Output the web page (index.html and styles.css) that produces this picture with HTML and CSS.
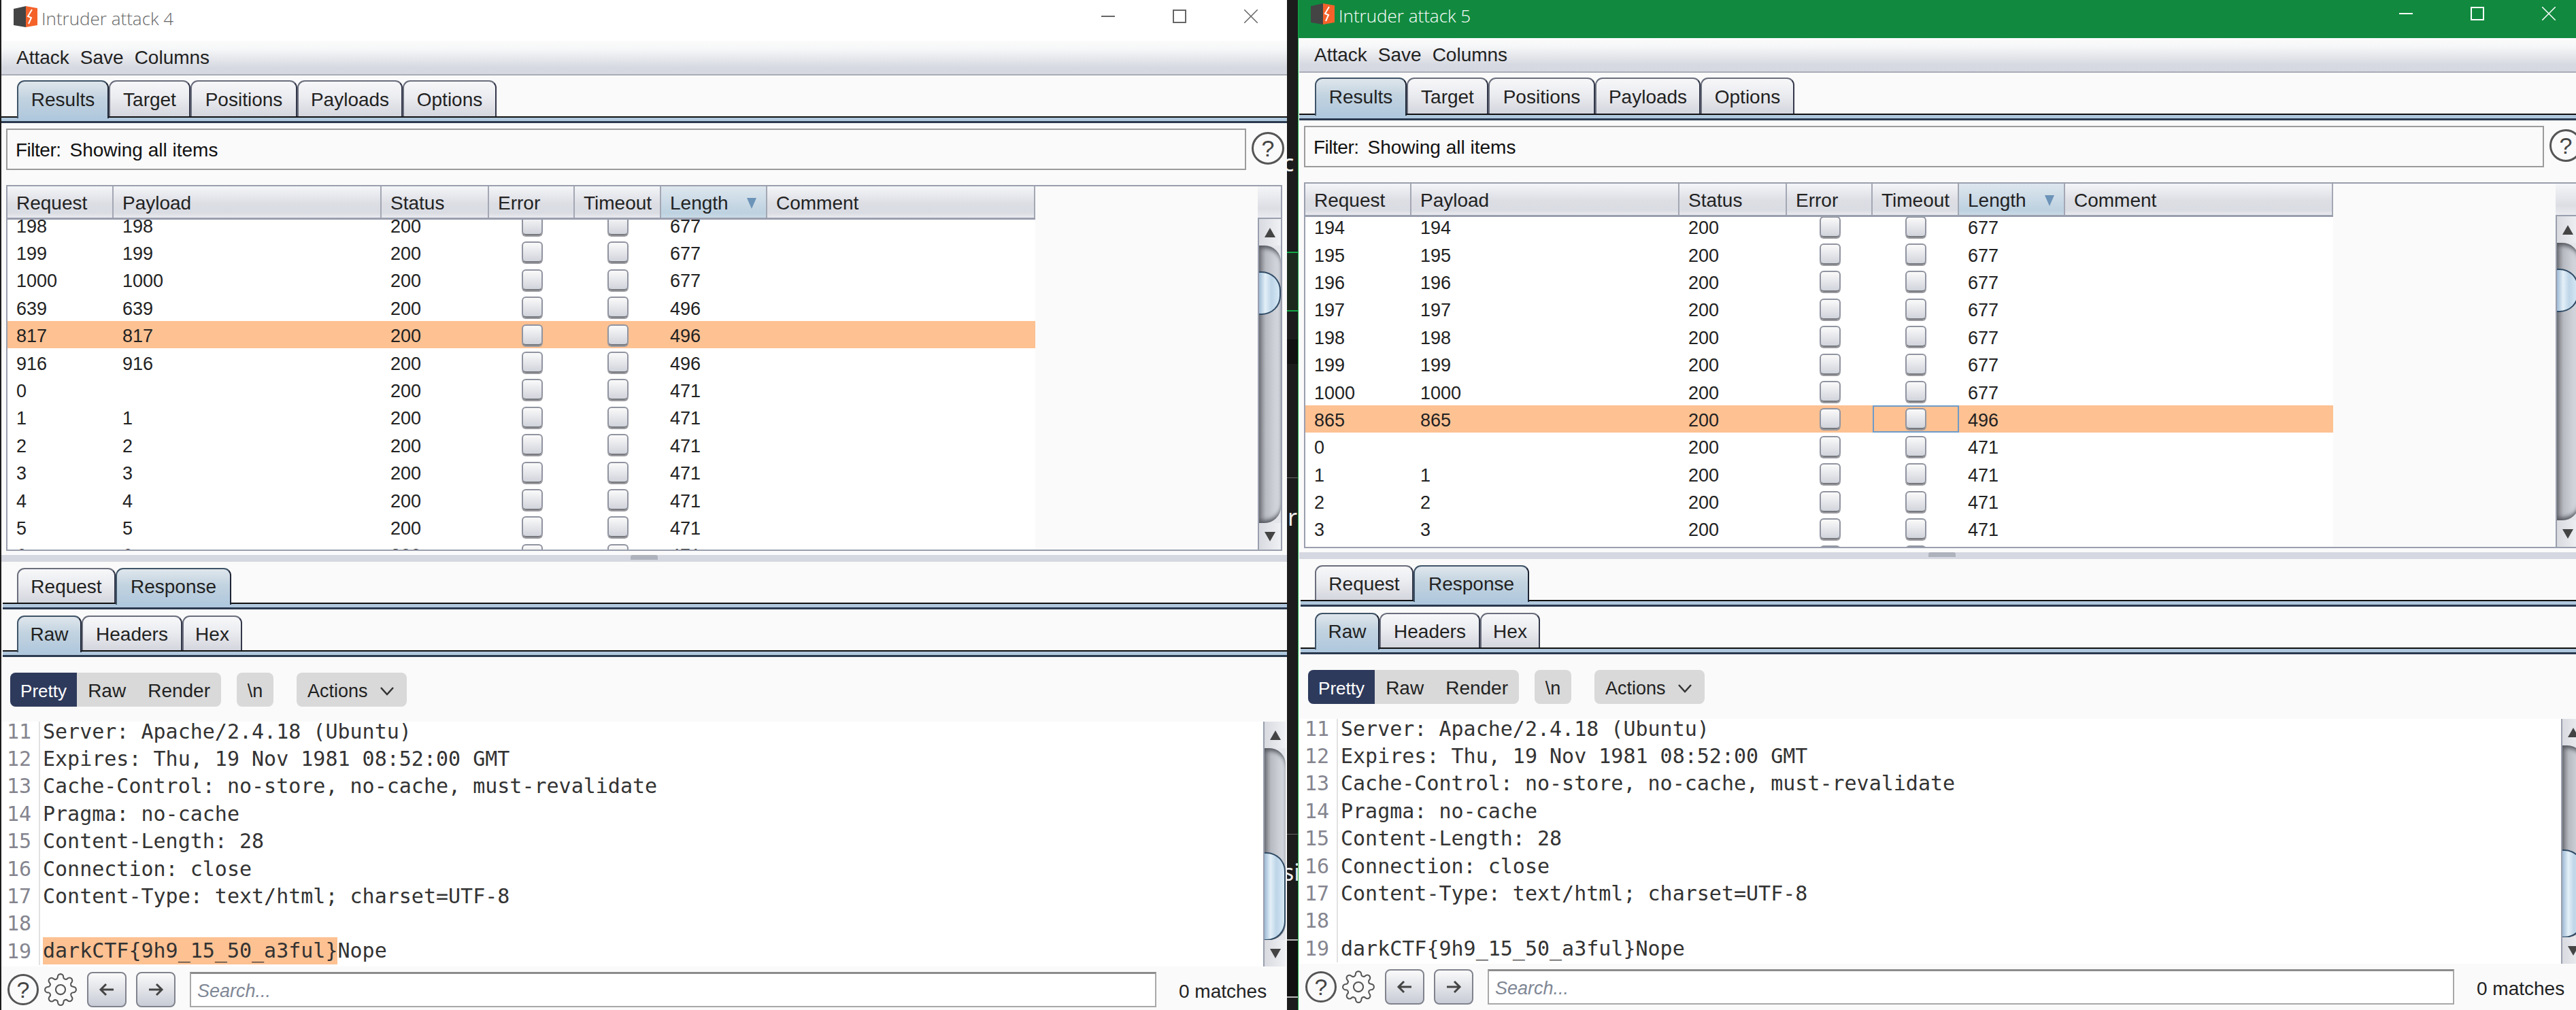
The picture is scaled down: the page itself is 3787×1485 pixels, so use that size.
FILE: index.html
```html
<!DOCTYPE html>
<html lang="en">
<head>
    <meta charset="UTF-8">
    <title>Intruder attacks</title>
    <link rel="stylesheet" href="styles.css">
</head>
<body>

    <!-- attack 4 -->
    <section class="win">
        <header class="title">
            <svg class="logo" viewBox="0 0 35 31"><path d="M0 4 18 0V31L0 28Z" fill="#444"/><path d="M18 0 35 3V28L18 31Z" fill="#f4622a"/><path d="M27 5 21 15 26 17 22 26" fill="none" stroke="#fff" stroke-width="2"/></svg>
            <span class="title-text">Intruder attack 4</span>
            <div class="controls">
                <svg viewBox="0 0 20 20"><path d="M0 10H20" stroke="currentColor" stroke-width="2"/></svg>
                <svg viewBox="0 0 20 20"><rect x="1" y="1" width="18" height="18" fill="none" stroke="currentColor" stroke-width="2"/></svg>
                <svg viewBox="0 0 20 20"><path d="M0 0 20 20M20 0 0 20" stroke="currentColor" stroke-width="1.5"/></svg>
            </div>
        </header>
        <nav class="menu"><span>Attack</span><span>Save</span><span>Columns</span></nav>

        <div class="tabs tabs-main">
            <div class="tab tab-active tab-results">Results</div>
            <div class="tab tab-target">Target</div>
            <div class="tab tab-positions">Positions</div>
            <div class="tab tab-payloads">Payloads</div>
            <div class="tab tab-options">Options</div>
        </div>
        <div class="strip"></div>

        <div class="filter-row">
            <div class="filter"><span class="filter-label">Filter:</span><span class="filter-text">Showing all items</span></div>
            <span class="help">?</span>
        </div>

        <div class="results">
            <div class="grid">
                <div class="row head">
                    <span>Request</span><span>Payload</span><span>Status</span><span>Error</span><span>Timeout</span>
                    <span class="sorted">Length<i class="sort-arrow"></i></span><span>Comment</span>
                </div>
                <div class="rows">
                    <div class="rows-inner rows-a">
                        <div class="row"><span>198</span><span>198</span><span>200</span><span class="c"><i class="check"></i></span><span class="c"><i class="check"></i></span><span>677</span></div>
                        <div class="row"><span>199</span><span>199</span><span>200</span><span class="c"><i class="check"></i></span><span class="c"><i class="check"></i></span><span>677</span></div>
                        <div class="row"><span>1000</span><span>1000</span><span>200</span><span class="c"><i class="check"></i></span><span class="c"><i class="check"></i></span><span>677</span></div>
                        <div class="row"><span>639</span><span>639</span><span>200</span><span class="c"><i class="check"></i></span><span class="c"><i class="check"></i></span><span>496</span></div>
                        <div class="row row-hit"><span>817</span><span>817</span><span>200</span><span class="c"><i class="check"></i></span><span class="c"><i class="check"></i></span><span>496</span></div>
                        <div class="row"><span>916</span><span>916</span><span>200</span><span class="c"><i class="check"></i></span><span class="c"><i class="check"></i></span><span>496</span></div>
                        <div class="row"><span>0</span><span></span><span>200</span><span class="c"><i class="check"></i></span><span class="c"><i class="check"></i></span><span>471</span></div>
                        <div class="row"><span>1</span><span>1</span><span>200</span><span class="c"><i class="check"></i></span><span class="c"><i class="check"></i></span><span>471</span></div>
                        <div class="row"><span>2</span><span>2</span><span>200</span><span class="c"><i class="check"></i></span><span class="c"><i class="check"></i></span><span>471</span></div>
                        <div class="row"><span>3</span><span>3</span><span>200</span><span class="c"><i class="check"></i></span><span class="c"><i class="check"></i></span><span>471</span></div>
                        <div class="row"><span>4</span><span>4</span><span>200</span><span class="c"><i class="check"></i></span><span class="c"><i class="check"></i></span><span>471</span></div>
                        <div class="row"><span>5</span><span>5</span><span>200</span><span class="c"><i class="check"></i></span><span class="c"><i class="check"></i></span><span>471</span></div>
                        <div class="row"><span>6</span><span>6</span><span>200</span><span class="c"><i class="check"></i></span><span class="c"><i class="check"></i></span><span>471</span></div>
                    </div>
                </div>
            </div>
            <div class="table-scroll">
                <div class="scroll-head"></div>
                <div class="scroll">
                    <div class="scroll-btn"><i class="arrow-up"></i></div>
                    <div class="track"><div class="thumb thumb-table"></div></div>
                    <div class="scroll-btn"><i class="arrow-down"></i></div>
                </div>
            </div>
        </div>

        <div class="split"><div class="split-bar"><i class="split-handle"></i></div></div>

        <div class="tabs">
            <div class="tab tab-request">Request</div>
            <div class="tab tab-active tab-response">Response</div>
        </div>
        <div class="strip strip-sub"></div>
        <div class="tabs tabs-inner">
            <div class="tab tab-active tab-raw">Raw</div>
            <div class="tab tab-headers">Headers</div>
            <div class="tab tab-hex">Hex</div>
        </div>
        <div class="strip strip-sub"></div>

        <div class="toolbar">
            <div class="seg"><span class="seg-on">Pretty</span><span>Raw</span><span>Render</span></div>
            <span class="btn btn-nl">\n</span>
            <span class="btn btn-actions">Actions<svg viewBox="0 0 22 14"><path d="M2 2 11 12 20 2" fill="none" stroke="#333" stroke-width="2.5"/></svg></span>
        </div>

        <div class="code-pane">
            <div class="code">
                <div class="line"><span class="num">11</span><span class="txt">Server: Apache/2.4.18 (Ubuntu)</span></div>
                <div class="line"><span class="num">12</span><span class="txt">Expires: Thu, 19 Nov 1981 08:52:00 GMT</span></div>
                <div class="line"><span class="num">13</span><span class="txt">Cache-Control: no-store, no-cache, must-revalidate</span></div>
                <div class="line"><span class="num">14</span><span class="txt">Pragma: no-cache</span></div>
                <div class="line"><span class="num">15</span><span class="txt">Content-Length: 28</span></div>
                <div class="line"><span class="num">16</span><span class="txt">Connection: close</span></div>
                <div class="line"><span class="num">17</span><span class="txt">Content-Type: text/html; charset=UTF-8</span></div>
                <div class="line"><span class="num">18</span><span class="txt"></span></div>
                <div class="line"><span class="num">19</span><span class="txt"><mark>darkCTF{9h9_15_50_a3ful}</mark>Nope</span></div>
            </div>
            <div class="scroll scroll-code">
                <div class="scroll-btn"><i class="arrow-up"></i></div>
                <div class="track"><div class="thumb thumb-code"></div></div>
                <div class="scroll-btn"><i class="arrow-down"></i></div>
            </div>
        </div>

        <div class="bottom">
            <span class="help help-bottom">?</span>
            <svg class="gear" viewBox="0 0 24 24"><circle cx="12" cy="12" r="3.4"/><path d="M19.4 15a1.65 1.65 0 0 0 .33 1.82l.06.06a2 2 0 0 1 0 2.83 2 2 0 0 1-2.83 0l-.06-.06a1.65 1.65 0 0 0-1.82-.33 1.65 1.65 0 0 0-1 1.51V21a2 2 0 0 1-2 2 2 2 0 0 1-2-2v-.09A1.65 1.65 0 0 0 9 19.4a1.65 1.65 0 0 0-1.82.33l-.06.06a2 2 0 0 1-2.83 0 2 2 0 0 1 0-2.83l.06-.06a1.65 1.65 0 0 0 .33-1.82 1.65 1.65 0 0 0-1.51-1H3a2 2 0 0 1-2-2 2 2 0 0 1 2-2h.09A1.65 1.65 0 0 0 4.6 9a1.65 1.65 0 0 0-.33-1.82l-.06-.06a2 2 0 0 1 0-2.83 2 2 0 0 1 2.83 0l.06.06a1.65 1.65 0 0 0 1.82.33H9a1.65 1.65 0 0 0 1-1.51V3a2 2 0 0 1 2-2 2 2 0 0 1 2 2v.09a1.65 1.65 0 0 0 1 1.51 1.65 1.65 0 0 0 1.82-.33l.06-.06a2 2 0 0 1 2.83 0 2 2 0 0 1 0 2.83l-.06.06a1.65 1.65 0 0 0-.33 1.82V9a1.65 1.65 0 0 0 1.51 1H21a2 2 0 0 1 2 2 2 2 0 0 1-2 2h-.09a1.65 1.65 0 0 0-1.51 1z"/></svg>
            <span class="nav-btn nav-prev"><svg viewBox="0 0 24 20"><path d="M22 10H3M11 2 3 10 11 18" fill="none" stroke="#444" stroke-width="3"/></svg></span>
            <span class="nav-btn"><svg viewBox="0 0 24 20"><path d="M2 10H21M13 2 21 10 13 18" fill="none" stroke="#444" stroke-width="3"/></svg></span>
            <div class="search">Search...</div>
            <span class="matches">0 matches</span>
        </div>
    </section>

    <!-- 後ろのデスクトップが見えている隙間 -->
    <div class="gap">
        <i class="gap-band gap-band-green"></i>
        <i class="gap-band gap-band-dark"></i>
        <i class="gap-band gap-band-low"></i>
        <i class="gap-line gap-line-a"></i>
        <i class="gap-line gap-line-b"></i>
        <span class="gap-text gap-text-c">c</span>
        <span class="gap-text gap-text-r">r</span>
        <span class="gap-text gap-text-s">si</span>
    </div>

    <!-- attack 5 -->
    <section class="win win-active">
        <header class="title">
            <svg class="logo" viewBox="0 0 35 31"><path d="M0 4 18 0V31L0 28Z" fill="#444"/><path d="M18 0 35 3V28L18 31Z" fill="#f4622a"/><path d="M27 5 21 15 26 17 22 26" fill="none" stroke="#fff" stroke-width="2"/></svg>
            <span class="title-text">Intruder attack 5</span>
            <div class="controls">
                <svg viewBox="0 0 20 20"><path d="M0 10H20" stroke="currentColor" stroke-width="2"/></svg>
                <svg viewBox="0 0 20 20"><rect x="1" y="1" width="18" height="18" fill="none" stroke="currentColor" stroke-width="2"/></svg>
                <svg viewBox="0 0 20 20"><path d="M0 0 20 20M20 0 0 20" stroke="currentColor" stroke-width="1.5"/></svg>
            </div>
        </header>
        <nav class="menu"><span>Attack</span><span>Save</span><span>Columns</span></nav>

        <div class="tabs tabs-main">
            <div class="tab tab-active tab-results">Results</div>
            <div class="tab tab-target">Target</div>
            <div class="tab tab-positions">Positions</div>
            <div class="tab tab-payloads">Payloads</div>
            <div class="tab tab-options">Options</div>
        </div>
        <div class="strip"></div>

        <div class="filter-row">
            <div class="filter"><span class="filter-label">Filter:</span><span class="filter-text">Showing all items</span></div>
            <span class="help">?</span>
        </div>

        <div class="results">
            <div class="grid">
                <div class="row head">
                    <span>Request</span><span>Payload</span><span>Status</span><span>Error</span><span>Timeout</span>
                    <span class="sorted">Length<i class="sort-arrow"></i></span><span>Comment</span>
                </div>
                <div class="rows">
                    <div class="rows-inner rows-b">
                        <div class="row"><span>194</span><span>194</span><span>200</span><span class="c"><i class="check"></i></span><span class="c"><i class="check"></i></span><span>677</span></div>
                        <div class="row"><span>195</span><span>195</span><span>200</span><span class="c"><i class="check"></i></span><span class="c"><i class="check"></i></span><span>677</span></div>
                        <div class="row"><span>196</span><span>196</span><span>200</span><span class="c"><i class="check"></i></span><span class="c"><i class="check"></i></span><span>677</span></div>
                        <div class="row"><span>197</span><span>197</span><span>200</span><span class="c"><i class="check"></i></span><span class="c"><i class="check"></i></span><span>677</span></div>
                        <div class="row"><span>198</span><span>198</span><span>200</span><span class="c"><i class="check"></i></span><span class="c"><i class="check"></i></span><span>677</span></div>
                        <div class="row"><span>199</span><span>199</span><span>200</span><span class="c"><i class="check"></i></span><span class="c"><i class="check"></i></span><span>677</span></div>
                        <div class="row"><span>1000</span><span>1000</span><span>200</span><span class="c"><i class="check"></i></span><span class="c"><i class="check"></i></span><span>677</span></div>
                        <div class="row row-hit"><span>865</span><span>865</span><span>200</span><span class="c"><i class="check"></i></span><span class="c c-focus"><i class="check"></i></span><span>496</span></div>
                        <div class="row"><span>0</span><span></span><span>200</span><span class="c"><i class="check"></i></span><span class="c"><i class="check"></i></span><span>471</span></div>
                        <div class="row"><span>1</span><span>1</span><span>200</span><span class="c"><i class="check"></i></span><span class="c"><i class="check"></i></span><span>471</span></div>
                        <div class="row"><span>2</span><span>2</span><span>200</span><span class="c"><i class="check"></i></span><span class="c"><i class="check"></i></span><span>471</span></div>
                        <div class="row"><span>3</span><span>3</span><span>200</span><span class="c"><i class="check"></i></span><span class="c"><i class="check"></i></span><span>471</span></div>
                        <div class="row"><span>4</span><span>4</span><span>200</span><span class="c"><i class="check"></i></span><span class="c"><i class="check"></i></span><span>471</span></div>
                    </div>
                </div>
            </div>
            <div class="table-scroll">
                <div class="scroll-head"></div>
                <div class="scroll">
                    <div class="scroll-btn"><i class="arrow-up"></i></div>
                    <div class="track"><div class="thumb thumb-table"></div></div>
                    <div class="scroll-btn"><i class="arrow-down"></i></div>
                </div>
            </div>
        </div>

        <div class="split"><div class="split-bar"><i class="split-handle"></i></div></div>

        <div class="tabs">
            <div class="tab tab-request">Request</div>
            <div class="tab tab-active tab-response">Response</div>
        </div>
        <div class="strip strip-sub"></div>
        <div class="tabs tabs-inner">
            <div class="tab tab-active tab-raw">Raw</div>
            <div class="tab tab-headers">Headers</div>
            <div class="tab tab-hex">Hex</div>
        </div>
        <div class="strip strip-sub"></div>

        <div class="toolbar">
            <div class="seg"><span class="seg-on">Pretty</span><span>Raw</span><span>Render</span></div>
            <span class="btn btn-nl">\n</span>
            <span class="btn btn-actions">Actions<svg viewBox="0 0 22 14"><path d="M2 2 11 12 20 2" fill="none" stroke="#333" stroke-width="2.5"/></svg></span>
        </div>

        <div class="code-pane">
            <div class="code">
                <div class="line"><span class="num">11</span><span class="txt">Server: Apache/2.4.18 (Ubuntu)</span></div>
                <div class="line"><span class="num">12</span><span class="txt">Expires: Thu, 19 Nov 1981 08:52:00 GMT</span></div>
                <div class="line"><span class="num">13</span><span class="txt">Cache-Control: no-store, no-cache, must-revalidate</span></div>
                <div class="line"><span class="num">14</span><span class="txt">Pragma: no-cache</span></div>
                <div class="line"><span class="num">15</span><span class="txt">Content-Length: 28</span></div>
                <div class="line"><span class="num">16</span><span class="txt">Connection: close</span></div>
                <div class="line"><span class="num">17</span><span class="txt">Content-Type: text/html; charset=UTF-8</span></div>
                <div class="line"><span class="num">18</span><span class="txt"></span></div>
                <div class="line"><span class="num">19</span><span class="txt">darkCTF{9h9_15_50_a3ful}Nope</span></div>
            </div>
            <div class="scroll scroll-code">
                <div class="scroll-btn"><i class="arrow-up"></i></div>
                <div class="track"><div class="thumb thumb-code"></div></div>
                <div class="scroll-btn"><i class="arrow-down"></i></div>
            </div>
        </div>

        <div class="bottom">
            <span class="help help-bottom">?</span>
            <svg class="gear" viewBox="0 0 24 24"><circle cx="12" cy="12" r="3.4"/><path d="M19.4 15a1.65 1.65 0 0 0 .33 1.82l.06.06a2 2 0 0 1 0 2.83 2 2 0 0 1-2.83 0l-.06-.06a1.65 1.65 0 0 0-1.82-.33 1.65 1.65 0 0 0-1 1.51V21a2 2 0 0 1-2 2 2 2 0 0 1-2-2v-.09A1.65 1.65 0 0 0 9 19.4a1.65 1.65 0 0 0-1.82.33l-.06.06a2 2 0 0 1-2.83 0 2 2 0 0 1 0-2.83l.06-.06a1.65 1.65 0 0 0 .33-1.82 1.65 1.65 0 0 0-1.51-1H3a2 2 0 0 1-2-2 2 2 0 0 1 2-2h.09A1.65 1.65 0 0 0 4.6 9a1.65 1.65 0 0 0-.33-1.82l-.06-.06a2 2 0 0 1 0-2.83 2 2 0 0 1 2.83 0l.06.06a1.65 1.65 0 0 0 1.82.33H9a1.65 1.65 0 0 0 1-1.51V3a2 2 0 0 1 2-2 2 2 0 0 1 2 2v.09a1.65 1.65 0 0 0 1 1.51 1.65 1.65 0 0 0 1.82-.33l.06-.06a2 2 0 0 1 2.83 0 2 2 0 0 1 0 2.83l-.06.06a1.65 1.65 0 0 0-.33 1.82V9a1.65 1.65 0 0 0 1.51 1H21a2 2 0 0 1 2 2 2 2 0 0 1-2 2h-.09a1.65 1.65 0 0 0-1.51 1z"/></svg>
            <span class="nav-btn nav-prev"><svg viewBox="0 0 24 20"><path d="M22 10H3M11 2 3 10 11 18" fill="none" stroke="#444" stroke-width="3"/></svg></span>
            <span class="nav-btn"><svg viewBox="0 0 24 20"><path d="M2 10H21M13 2 21 10 13 18" fill="none" stroke="#444" stroke-width="3"/></svg></span>
            <div class="search">Search...</div>
            <span class="matches">0 matches</span>
        </div>
    </section>

</body>
</html>
```

FILE: styles.css
```css
/* --- base --- */
:root {
    --panel: #fafafa;
    --hit: #fdc192;
    --line: #9a9fae;
    --tab-blue: #b0c8dd;
}

body {
    margin: 0;
    padding-left: 2px;
    height: 1485px;
    display: flex;
    overflow: hidden;
    background-color: #1c1c1c;
    font-family: "Liberation Sans", Arial, sans-serif;
    font-size: 28px;
    color: #222;
}

/* --- window --- */
.win {
    flex: none;
    width: 1890px;
    height: 1485px;
    display: flex;
    flex-direction: column;
    background-color: var(--panel);
}

.win-active {
    box-sizing: content-box;
    border-left: 1px solid #12a845;
    padding-left: 1px;
}

.title {
    flex: none;
    height: 60px;
    box-sizing: border-box;
    display: flex;
    padding: 9px 43px 0 18px;
    background-color: #fff;
    color: #666;
}

.win-active .title {
    height: 56px;
    padding-top: 5px;
    margin-left: -1px;
    background-color: #118a3f;
    color: #fff;
}

.logo {
    width: 35px;
    height: 31px;
    flex: none;
}

.title-text {
    margin-left: 6px;
    font-family: "Open Sans", sans-serif;
    font-weight: 300;
    font-size: 26px;
    line-height: 36px;
}

.controls {
    margin-left: auto;
    margin-top: 5px;
    display: flex;
    gap: 85px;
}

.controls svg {
    width: 20px;
    height: 20px;
}

.menu {
    flex: none;
    height: 51px;
    box-sizing: border-box;
    display: flex;
    align-items: center;
    gap: 16px;
    padding: 0 0 0 22px;
    border-bottom: 2px solid #a9adb8;
    background: linear-gradient(#fbfbfb 0%, #f6f7f8 25%, #d6d9e1 80%, #d5d8e0 100%);
}

/* --- tabs --- */
.tabs {
    flex: none;
    height: 51px;
    display: flex;
    padding-left: 23px;
}

.tabs-main {
    height: 60px;
    padding-top: 7px;
    box-sizing: border-box;
}

.tabs-inner {
    margin-top: 9px;
}

.tab {
    box-sizing: border-box;
    height: 100%;
    display: flex;
    align-items: center;
    justify-content: center;
    padding-top: 3px;
    border: 2px solid #6a6e7c;
    border-bottom: none;
    border-right-color: #33384a;
    border-radius: 11px 11px 0 0;
    background: linear-gradient(#f7f7f9, #ebecf0 45%, #d4d6de);
}

.tab-active {
    position: relative;
    z-index: 1;
    height: calc(100% + 3px);
    padding-bottom: 3px;
    border-color: #3f5468;
    border-right-color: #1c2434;
    background: linear-gradient(#dfe6ec, #c2d3e0 45%, var(--tab-blue));
}

.tab-results { width: 135px; }
.tab-target { width: 120px; }
.tab-positions { width: 157px; }
.tab-payloads { width: 155px; }
.tab-options { width: 138px; }
.tab-request { width: 145px; }
.tab-response { width: 170px; }
.tab-raw { width: 95px; }
.tab-headers { width: 148px; }
.tab-hex { width: 88px; }

.strip {
    flex: none;
    height: 10px;
    box-sizing: border-box;
    border-top: 2px solid #111;
    border-bottom: 3px solid #2b3a4f;
    background-color: var(--tab-blue);
}

.strip-sub {
    margin-left: 2px;
}

/* --- filter --- */
.filter-row {
    flex: none;
    display: flex;
    margin: 8px 0 22px 7px;
    height: 61px;
}

.filter {
    width: 1823px;
    box-sizing: border-box;
    display: flex;
    align-items: center;
    padding-left: 12px;
    padding-top: 2px;
    border: 2px solid #9b9b9b;
    color: #111;
}

.filter-label {
    letter-spacing: -0.5px;
}

.filter-text {
    margin-left: 13px;
}

.help {
    flex: none;
    width: 48px;
    height: 48px;
    box-sizing: border-box;
    margin: 5px 0 0 8px;
    display: flex;
    align-items: center;
    justify-content: center;
    border: 3px solid #555;
    border-radius: 50%;
    font-size: 34px;
    color: #444;
}

/* --- results table --- */
.results {
    flex: none;
    height: 538px;
    width: 1876px;
    margin-left: 7px;
    box-sizing: border-box;
    display: flex;
    border: 2px solid var(--line);
}

.grid {
    flex: 1;
    min-width: 0;
    display: flex;
    flex-direction: column;
}

.row {
    display: grid;
    grid-template-columns: 156px 394px 158px 126px 127px 156px 394px;
    width: 1511px;
    height: 40.4px;
    align-items: center;
    font-size: 27px;
    background-color: #fff;
}

.row > span {
    height: 100%;
    box-sizing: border-box;
    display: flex;
    align-items: center;
    padding-left: 13px;
    padding-top: 5px;
}

.row > .c {
    padding-left: 0;
    padding-top: 0;
    justify-content: center;
}

.c-focus {
    border: 2px solid #6d9bc9;
}

.row-hit {
    background-color: var(--hit);
}

.head {
    flex: none;
    height: 46px;
    font-size: 28px;
    box-sizing: content-box;
    border-bottom: 3px solid var(--line);
    background: linear-gradient(#f4f5f8, #dcdee4 55%, #dadce3 85%, #e9ebf0);
}

.head > span {
    padding-top: 3px;
    border-right: 2px solid #a4a8b4;
}

.head > .sorted {
    position: relative;
    background: linear-gradient(#dde6ee, #bdd1e0 85%, #c9dae6);
}

.sort-arrow {
    margin-left: 27px;
    border-style: solid;
    border-width: 16px 7px 0;
    border-color: #6c93b8 transparent transparent;
}

.rows {
    flex: 1;
    min-height: 0;
    overflow: hidden;
}

.rows-a { margin-top: -12.6px; }
.rows-b { margin-top: -6px; }

.check {
    width: 31px;
    height: 31px;
    box-sizing: border-box;
    border: 2px solid #9094a0;
    border-bottom-color: #77797f;
    border-radius: 6px;
    background: linear-gradient(#fafafa, #d2d4dc);
    box-shadow: 0 2px 0 #9a9a9f;
}

/* --- scrollbars --- */
.table-scroll {
    flex: none;
    width: 34px;
    display: flex;
    flex-direction: column;
}

.scroll-head {
    flex: none;
    height: 46px;
    background: linear-gradient(#f4f5f8, #dcdee4 70%, #e9ebf0);
}

.scroll {
    flex: 1;
    min-height: 0;
    display: flex;
    flex-direction: column;
    border-left: 2px solid var(--line);
    border-top: 2px solid var(--line);
    background-color: #e4e6eb;
}

.scroll-btn {
    flex: none;
    height: 39px;
    display: flex;
    align-items: center;
    justify-content: center;
    background: linear-gradient(90deg, #d8dae0, #f0f1f4);
}

.arrow-up,
.arrow-down {
    border-style: solid;
    border-width: 0 8px 14px;
    border-color: transparent transparent #444;
}

.arrow-down {
    border-width: 14px 8px 0;
    border-color: #444 transparent transparent;
}

.track {
    flex: 1;
    min-height: 0;
    display: flex;
    flex-direction: column;
    border-radius: 0 24px 24px 0;
    background: linear-gradient(90deg, #75777d, #b8bac1 30%, #cdd0d7 70%, #d6d9e0);
    box-shadow: inset 0 7px 6px -3px #55585f, inset 0 -7px 6px -3px #55585f;
}

.thumb {
    flex: none;
    box-sizing: border-box;
    border: 2px solid #2f4a64;
    border-left: none;
    border-radius: 0 28px 28px 0;
    background: linear-gradient(90deg, #9dbad4, #e4f0f8 30%, #bdd5e8 60%, #d6e8f5);
}

.thumb-table {
    margin-top: 38px;
    height: 64px;
}

.thumb-code {
    margin-top: 153px;
    height: 130px;
}

/* --- split --- */
.split {
    flex: none;
    height: 25px;
    padding-top: 6px;
    box-sizing: border-box;
}

.split-bar {
    height: 10px;
    display: flex;
    justify-content: center;
    background-color: #d5d8e0;
}

.split-handle {
    width: 40px;
    height: 7px;
    border-radius: 3px 3px 0 0;
    background-color: #aeb2bc;
}

/* --- toolbar --- */
.toolbar {
    flex: none;
    height: 95px;
    box-sizing: border-box;
    display: flex;
    align-items: center;
    padding-left: 13px;
    font-size: 27px;
}

.seg,
.btn {
    height: 50px;
    box-sizing: border-box;
    display: flex;
    align-items: center;
    padding-top: 5px;
    border-radius: 8px;
    background-color: #d9d9d9;
}

.seg {
    width: 310px;
    padding-top: 0;
    overflow: hidden;
    font-size: 28px;
}

.seg > span {
    height: 100%;
    box-sizing: border-box;
    display: flex;
    align-items: center;
    padding: 5px 16px 0;
}

.seg > .seg-on {
    width: 99px;
    justify-content: center;
    padding: 5px 0 0;
    background-color: #2e3a5c;
    color: #fff;
    font-size: 26px;
}

.btn-nl {
    width: 54px;
    margin-left: 23px;
    justify-content: center;
}

.btn-actions {
    width: 162px;
    margin-left: 34px;
    padding-left: 16px;
}

.btn-actions svg {
    width: 22px;
    height: 14px;
    margin-left: 17px;
}

/* --- response body --- */
.code-pane {
    flex: none;
    height: 360px;
    display: flex;
    padding-right: 2px;
}

.code {
    flex: 1;
    min-width: 0;
    overflow: hidden;
    background-color: #fff;
    font-family: "DejaVu Sans Mono", monospace;
    font-size: 30px;
    color: #333;
}

.line {
    display: flex;
    height: 40.4px;
    align-items: center;
    margin-top: 0;
}

.line:first-child {
    margin-top: -6px;
}

.num {
    flex: none;
    width: 44px;
    height: 100%;
    box-sizing: content-box;
    padding-right: 11px;
    display: flex;
    align-items: center;
    justify-content: flex-end;
    border-right: 2px solid #e2e2e2;
    color: #85858f;
}

.txt {
    padding-left: 4px;
    white-space: pre;
}

mark {
    display: inline-block;
    height: 40px;
    line-height: 40px;
    background-color: var(--hit);
    color: #333;
}

.scroll-code {
    flex: none;
    width: 33px;
    box-sizing: border-box;
    border-top: none;
}

/* --- bottom bar --- */
.bottom {
    flex: 1;
    min-height: 0;
    display: flex;
    align-items: flex-start;
    padding: 8px 0 0 9px;
}

.help-bottom {
    width: 46px;
    height: 46px;
    margin: 3px 0 0 0;
}

.gear {
    flex: none;
    width: 50px;
    height: 50px;
    margin: 1px 0 0 7px;
    fill: none;
    stroke: #555;
    stroke-width: 1;
}

.nav-btn {
    flex: none;
    width: 58px;
    height: 52px;
    box-sizing: border-box;
    display: flex;
    align-items: center;
    justify-content: center;
    border: 2px solid #80838d;
    border-radius: 8px;
    background: linear-gradient(#fafafa, #c8ccd6);
    margin-left: 14px;
}

.nav-prev {
    margin-left: 14px;
}

.nav-btn svg {
    width: 24px;
    height: 20px;
}

.search {
    flex: none;
    width: 1421px;
    height: 52px;
    box-sizing: border-box;
    margin-left: 21px;
    display: flex;
    align-items: center;
    padding-left: 9px;
    padding-top: 4px;
    border: 2px solid #a8a8a8;
    border-top: 3px solid #8c8c8c;
    background-color: #fff;
    font-style: italic;
    font-size: 27px;
    color: #7f8795;
}

.matches {
    margin: 13px 0 0 33px;
    white-space: nowrap;
}

/* --- desktop behind the windows --- */
.gap {
    flex: none;
    width: 16px;
    height: 1485px;
    position: relative;
    overflow: hidden;
    color: #eee;
    font-family: "Noto Sans", sans-serif;
    font-size: 34px;
}

.gap-band,
.gap-line {
    position: absolute;
    left: 0;
    width: 100%;
}

.gap-band-green {
    top: 370px;
    height: 88px;
    box-sizing: border-box;
    border-top: 2px solid #12a845;
    border-bottom: 2px solid #12a845;
    background-color: #1c2a1e;
}

.gap-band-dark {
    top: 499px;
    height: 36px;
    background-color: #111;
}

.gap-band-low {
    top: 1381px;
    height: 86px;
    box-sizing: border-box;
    border-top: 2px solid #bbb;
    border-bottom: 2px solid #bbb;
    background-color: #111;
}

.gap-line {
    height: 1px;
    background-color: #666;
}

.gap-line-a { top: 702px; }
.gap-line-b { top: 1226px; }

.gap-text {
    position: absolute;
    line-height: 1;
}

.gap-text-c { top: 222px; left: -6px; }
.gap-text-r { top: 743px; left: 1px; }
.gap-text-s { top: 1265px; left: -6px; }
```
